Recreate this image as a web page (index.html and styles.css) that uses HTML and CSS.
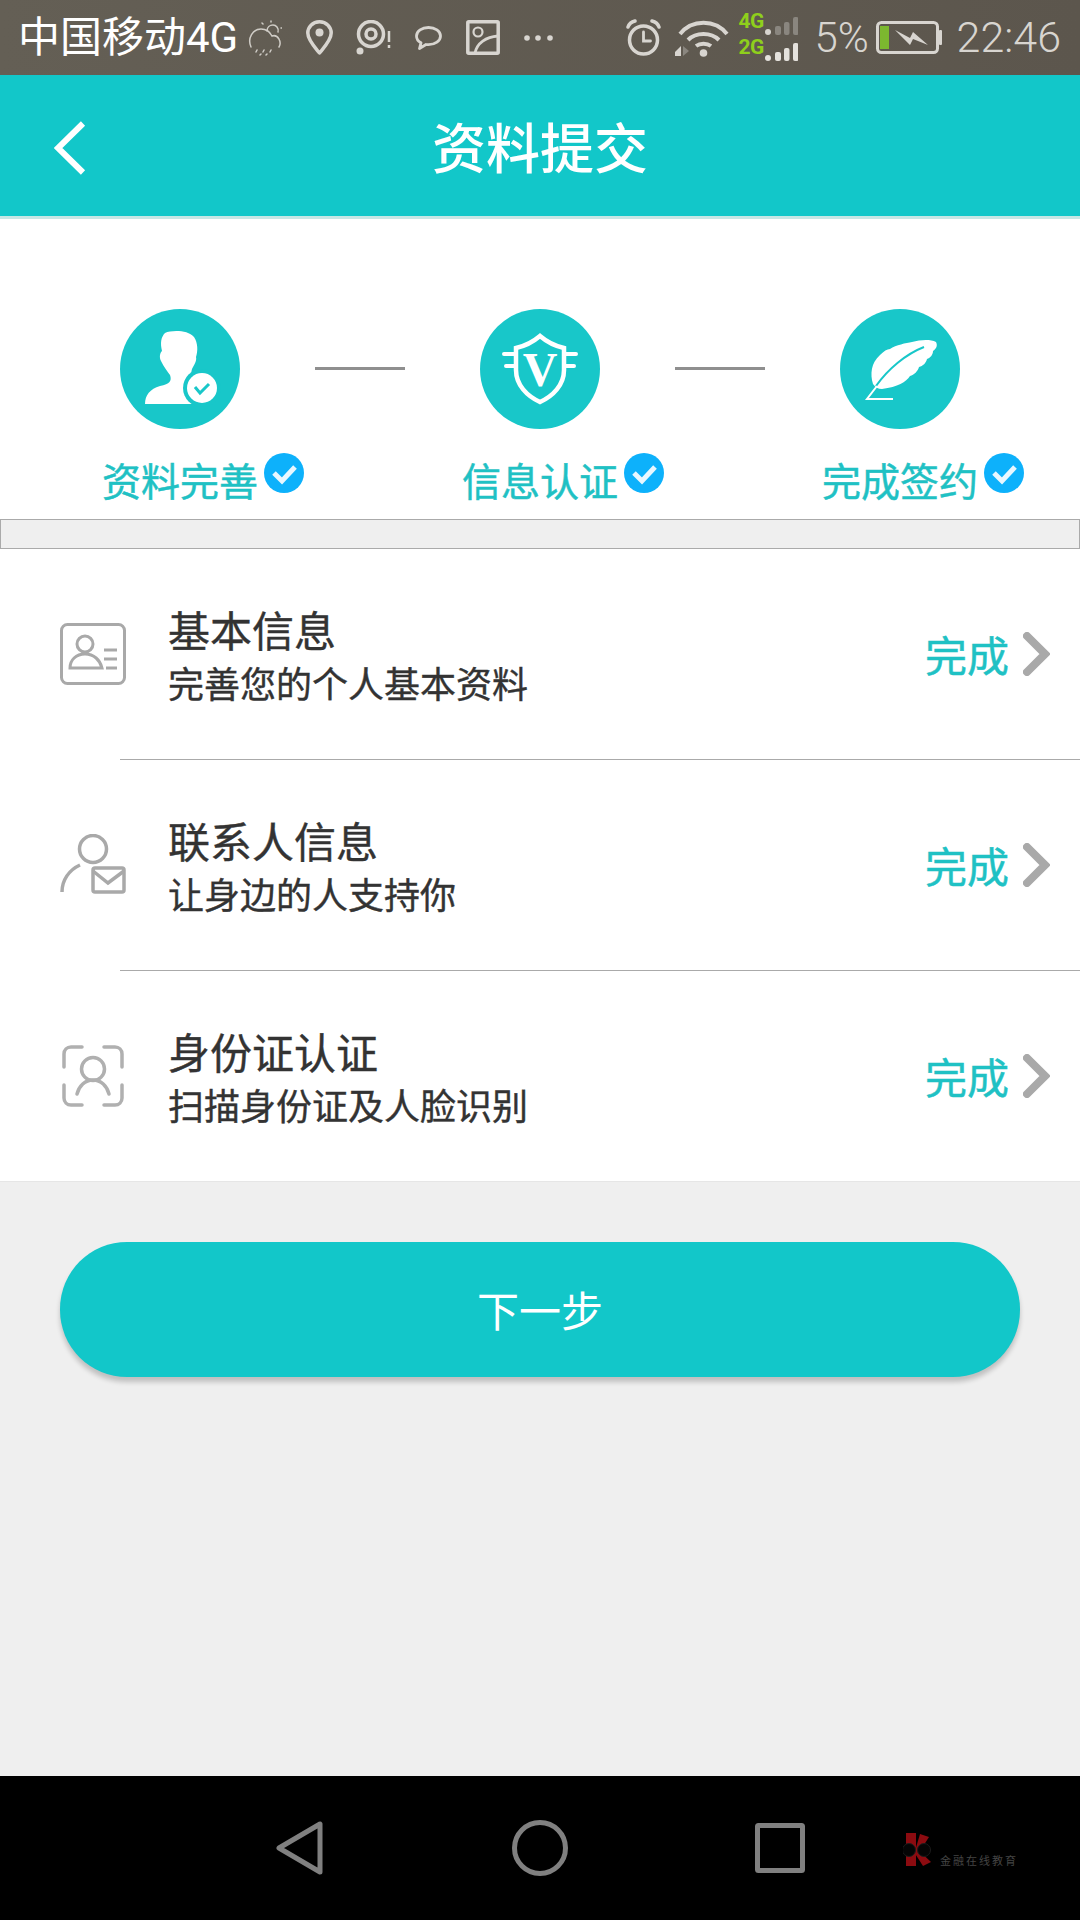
FILE: index.html
```html
<!DOCTYPE html>
<html lang="zh-CN">
<head>
<meta charset="utf-8">
<title>资料提交</title>
<link rel="stylesheet" href="styles.css">
</head>
<body>
<div class="screen">
  <div class="statusbar">
    <span class="carrier">中国移动4G</span>
    <svg class="si si-weather" width="34" height="36" viewBox="0 0 34 36" fill="none" stroke="#cfccc6" stroke-width="1.5" stroke-linecap="round"><path d="M3 27C-1 18 5 9 13 9c5 0 9 3 11 7 6-2 10 6 7 11"/><path d="M19 11c0-4 3-6 6-6s6 3 5 7"/><path d="M23 1v1M14 3l1 1M33 8h1M9 30l-1 2M16 30l-1 2M23 30l-1 2M13 34l-1 1M19 34l-1 1"/></svg>
    <svg class="si si-pin" width="27" height="35" viewBox="0 0 27 35" fill="none" stroke="#d8d5d0" stroke-width="3.5"><path d="M13.5 1.8C6.5 1.8 1.8 7 1.8 13c0 7 7.2 14.500 11.700 20 4.500-5.500 11.700-13 11.700-20 0-6-4.700-11.200-11.700-11.200Z" stroke-linejoin="round"/><circle cx="13.500" cy="12.500" r="4" fill="#d8d5d0" stroke="none"/></svg>
    <svg class="si si-eye" width="37" height="35" viewBox="0 0 37 35" fill="none" stroke="#d8d5d0" stroke-width="3.500"><circle cx="15" cy="14" r="12.500"/><circle cx="15" cy="14" r="5"/><circle cx="4" cy="31" r="3.500" fill="#d8d5d0" stroke="none"/><path d="M33 11v11M33 25v3" stroke-width="2.500"/></svg>
    <svg class="si si-chat" width="27" height="24" viewBox="0 0 27 24" fill="none" stroke="#d8d5d0" stroke-width="2.800" stroke-linejoin="round"><path d="M13.500 1.500c-6.500 0-12 3.500-12 8.500 0 3 2 5.500 4.500 6.800L4.500 22.500 11 18.500c1 .2 1.500.2 2.500.2 6.500 0 12-3.700 12-8.700s-5.500-8.500-12-8.500Z"/></svg>
    <svg class="si si-image" width="34" height="35" viewBox="0 0 34 35" fill="none" stroke="#d8d5d0" stroke-width="3.500"><rect x="1.800" y="1.800" width="30.400" height="31.400" rx="1"/><circle cx="12" cy="12" r="4.500" stroke-width="2.200"/><path d="M9 33c2-10 11-16 23-17" stroke-width="2.800"/></svg>
    <svg class="si si-dots" width="30" height="6" viewBox="0 0 30 6" fill="#d8d5d0"><circle cx="3" cy="3" r="2.800"/><circle cx="14" cy="3" r="2.800"/><circle cx="26" cy="3" r="2.800"/></svg>
    <div class="status-right">
      <svg class="si-alarm" width="37" height="37" viewBox="0 0 37 37" fill="none" stroke="#d8d5d0" stroke-width="3.500" stroke-linecap="round"><circle cx="18.500" cy="21" r="14"/><path d="M18.500 13v9h7" stroke-width="2.800"/><path d="M3 8c1-3 3-5 7-6M34 8c-1-3-3-5-7-6"/></svg>
      <svg class="si-wifi" width="55" height="38" viewBox="0 0 55 38" fill="none" stroke="#d8d5d0" stroke-width="4"><path d="M5 15C17 0 40 0 52 15M13 21c8-8 23-8 31 0M21 27c4-3 11-3 15 0"/><circle cx="28.500" cy="34" r="3.800" fill="#d8d5d0" stroke="none"/><path d="M0 33l6-6v10H0Z" fill="#d8d5d0" stroke="none"/><path d="M8 27l6 5-6 5Z" fill="#8a867f" stroke="none"/></svg>
      <div class="netsig">
        <div class="netline">
          <span class="netlabel">4G</span>
          <svg width="33" height="18" viewBox="0 0 33 18"><circle cx="3" cy="15" r="3" fill="#d8d5d0"/><rect x="10" y="9" width="6" height="9" rx="2" fill="#8a867f"/><rect x="19" y="5" width="5.500" height="13" rx="2" fill="#8a867f"/><rect x="28" y="0" width="5.500" height="18" rx="2" fill="#8a867f"/></svg>
        </div>
        <div class="netline">
          <span class="netlabel">2G</span>
          <svg width="33" height="18" viewBox="0 0 33 18" fill="#e4e1dc"><circle cx="3" cy="15" r="3"/><rect x="10" y="9" width="6" height="9" rx="2"/><rect x="19" y="5" width="5.500" height="13" rx="2"/><rect x="28" y="0" width="5.500" height="18" rx="2"/></svg>
        </div>
      </div>
      <span class="percent">5%</span>
      <svg class="si-battery" width="66" height="33" viewBox="0 0 66 33"><rect x="1.500" y="1.500" width="60" height="30" rx="4" fill="none" stroke="#d8d5d0" stroke-width="3"/><rect x="63" y="9" width="3" height="15" rx="1" fill="#d8d5d0"/><rect x="4" y="5" width="9" height="23" fill="#7cb82f"/><path d="M19 9l15 8 3-6 15 13-15-6-3 6Z" fill="#d8d5d0"/></svg>
      <span class="clock">22:46</span>
    </div>
  </div>

  <header class="appbar">
    <svg class="back" width="32" height="54" viewBox="0 0 32 54" fill="none" stroke="#fff" stroke-width="6"><path d="M29 2.500 4 27l25 24.500"/></svg>
    <h1 class="appbar-title">资料提交</h1>
  </header>

  <section class="steps">
    <div class="step">
      <svg class="step-icon" width="120" height="120" viewBox="0 0 120 120"><circle cx="60" cy="60" r="60" fill="#18c7c9"/><path d="M45 24c7-3 23-3 29 4 4 6 4 14 2 20 1 4-2 8-4 12-2 6 0 12 6 16v19H25c0-9 5-15 15-18 10-2 12-5 10-11-3-4-6-8-9-14-2-4-1-8 1-10-2-8-1-14 3-18Z" fill="#fff"/><circle cx="82" cy="79" r="19" fill="#18c7c9"/><circle cx="82" cy="79" r="15" fill="#fff"/><path d="M75 78l5 6 9-9" fill="none" stroke="#18c7c9" stroke-width="3"/></svg>
      <div class="step-label">资料完善<svg class="tick" width="40" height="40" viewBox="0 0 40 40"><circle cx="20" cy="20" r="20" fill="#0db1fb"/><path d="M10 20l8 8 13-14" fill="none" stroke="#e8f7ff" stroke-width="5"/></svg></div>
    </div>
    <div class="connector"></div>
    <div class="step">
      <svg class="step-icon" width="120" height="120" viewBox="0 0 120 120"><circle cx="60" cy="60" r="60" fill="#18c7c9"/><path d="M60 27c7 6 15 10 24 12v22c0 15-11 26-24 32-13-6-24-17-24-32V39c9-2 17-6 24-12Z" fill="none" stroke="#fff" stroke-width="4.500"/><path d="M24 45h11M26 57h9M85 45h11M85 57h9" stroke="#fff" stroke-width="4" stroke-linecap="round"/><text class="shield-v" x="60" y="77" text-anchor="middle">V</text></svg>
      <div class="step-label">信息认证<svg class="tick" width="40" height="40" viewBox="0 0 40 40"><circle cx="20" cy="20" r="20" fill="#0db1fb"/><path d="M10 20l8 8 13-14" fill="none" stroke="#e8f7ff" stroke-width="5"/></svg></div>
    </div>
    <div class="connector"></div>
    <div class="step">
      <svg class="step-icon" width="120" height="120" viewBox="0 0 120 120"><circle cx="60" cy="60" r="60" fill="#18c7c9"/><path d="M96 33c2 4 0 7-3 9 0 4-3 7-6 8-1 4-4 7-8 8-1 4-5 8-9 9-4 6-12 11-28 13-4 0-7-2-9-5-3-10-2-21 7-29 4-4 7-6 10-6 6-4 16-6 22-7 8-2 18-3 24 0Z" fill="#fff"/><path d="M84 38C66 45 48 60 36 77" fill="none" stroke="#18c7c9" stroke-width="2"/><path d="M37 77 27 90h26" stroke="#fff" stroke-width="2" fill="none"/></svg>
      <div class="step-label">完成签约<svg class="tick" width="40" height="40" viewBox="0 0 40 40"><circle cx="20" cy="20" r="20" fill="#0db1fb"/><path d="M10 20l8 8 13-14" fill="none" stroke="#e8f7ff" stroke-width="5"/></svg></div>
    </div>
  </section>

  <div class="band"></div>

  <section class="list">
    <div class="row">
      <svg class="row-icon" width="66" height="62" viewBox="0 0 66 62" fill="none" stroke="#a9a9a9" stroke-width="3"><rect x="1.500" y="1.500" width="63" height="59" rx="6"/><circle cx="25" cy="21" r="8"/><path d="M10 45c0-8 6-14 15-14s15 6 17 14Z"/><path d="M44 27h13M44 36h13M46 45h11"/></svg>
      <div class="row-text"><div class="row-title">基本信息</div><div class="row-sub">完善您的个人基本资料</div></div>
      <span class="row-status">完成</span>
      <svg class="row-chevron" width="27" height="44" viewBox="0 0 27 44" fill="none" stroke="#a9a9a9" stroke-width="8" stroke-linecap="round"><path d="M4 4l18 18L4 40"/></svg>
    </div>
    <div class="divider"></div>
    <div class="row">
      <svg class="row-icon" width="66" height="62" viewBox="0 2 66 62" fill="none" stroke="#a9a9a9" stroke-width="3.500"><circle cx="33" cy="17" r="13.500"/><path d="M2 60c0-12 7-22 18-27"/><rect x="33" y="36" width="31" height="24" rx="2"/><path d="M33 39l15 12 16-12"/></svg>
      <div class="row-text"><div class="row-title">联系人信息</div><div class="row-sub">让身边的人支持你</div></div>
      <span class="row-status">完成</span>
      <svg class="row-chevron" width="27" height="44" viewBox="0 0 27 44" fill="none" stroke="#a9a9a9" stroke-width="8" stroke-linecap="round"><path d="M4 4l18 18L4 40"/></svg>
    </div>
    <div class="divider"></div>
    <div class="row">
      <svg class="row-icon" width="66" height="62" viewBox="0 0 66 62" fill="none" stroke="#b0b0b0" stroke-width="3.500" stroke-linecap="round"><path d="M4 22V9c0-4 3-7 7-7h11M44 2h11c4 0 7 3 7 7v13M4 40v13c0 4 3 7 7 7h11M44 60h11c4 0 7-3 7-7V40"/><circle cx="33" cy="24" r="11.500"/><path d="M17 49c2-8 8-14 16-14s14 6 16 14"/></svg>
      <div class="row-text"><div class="row-title">身份证认证</div><div class="row-sub">扫描身份证及人脸识别</div></div>
      <span class="row-status">完成</span>
      <svg class="row-chevron" width="27" height="44" viewBox="0 0 27 44" fill="none" stroke="#a9a9a9" stroke-width="8" stroke-linecap="round"><path d="M4 4l18 18L4 40"/></svg>
    </div>
  </section>

  <main class="actions">
    <button class="next" type="button">下一步</button>
  </main>

  <nav class="navbar">
    <svg width="47" height="54" viewBox="0 0 47 54" fill="none" stroke="#808080" stroke-width="5" stroke-linejoin="round"><path d="M44 3v48L3 27Z"/></svg>
    <svg class="nav-home" width="56" height="56" viewBox="0 0 56 56" fill="none" stroke="#808080" stroke-width="5"><circle cx="28" cy="28" r="25.500"/></svg>
    <svg class="nav-recent" width="50" height="50" viewBox="0 0 50 50" fill="none" stroke="#808080" stroke-width="5" stroke-linejoin="round"><rect x="2.500" y="2.500" width="45" height="45" rx="1"/></svg>
    <div class="watermark">
      <svg width="28" height="33" viewBox="0 0 28 33"><path d="M3 0h10v33H3Z" fill="#8c0b10"/><path d="M17 1l9 3-9 14-5 0Z" fill="#8c0b10"/><path d="M12 14l16 15-8 4-9-14Z" fill="#8c0b10"/><circle cx="6" cy="17" r="6.500" fill="#050505" stroke="#1c1c1c"/><circle cx="21" cy="17" r="6.500" fill="#050505" stroke="#1c1c1c"/></svg>
      <span class="watermark-text">金融在线教育</span>
    </div>
  </nav>
</div>
</body>
</html>
```

FILE: styles.css
```css
* { box-sizing: border-box; }
html, body { margin: 0; padding: 0; }
body { font-family: "Noto Sans CJK SC", "Noto Sans", sans-serif; background: #efefef; }
.screen { width: 1080px; height: 1920px; display: flex; flex-direction: column; overflow: hidden; }

.statusbar { height: 75px; flex: none; display: flex; align-items: center; padding-left: 18px; background: linear-gradient(90deg, #645f55, #5c564d); color: #fff; }
.carrier { font-family: Roboto, "Noto Sans CJK SC", sans-serif; font-size: 42px; line-height: 75px; width: 230px; white-space: nowrap; }
.si { flex: none; }
.si-pin { margin-left: 24px; }
.si-eye { margin-left: 23px; }
.si-chat { margin-left: 22px; }
.si-image { margin-left: 24px; }
.si-dots { margin-left: 24px; }
.status-right { margin-left: auto; padding-right: 19px; display: flex; align-items: center; }
.si-alarm { margin-right: 13px; }
.si-wifi { margin-right: 9px; }
.netsig { display: flex; flex-direction: column; gap: 8px; margin-top: 2px; margin-right: 17px; }
.netline { display: flex; align-items: flex-end; height: 18px; }
.netlabel { align-self: flex-start; margin-top: -6px; font-family: Roboto, sans-serif; font-weight: 700; font-size: 21px; line-height: 20px; color: #8fcf1c; width: 26px; letter-spacing: -.5px; }
.percent, .clock { font-family: Roboto, sans-serif; font-weight: 300; font-size: 42px; line-height: 75px; color: #d8d5d0; }
.percent { width: 61px; white-space: nowrap; }
.clock { margin-left: 15px; font-size: 43px; }

.appbar { height: 144px; flex: none; position: relative; display: flex; align-items: center; justify-content: center; background: #12c7c9; border-bottom: 3px solid #c6e7e5; }
.appbar-title { margin: 0; font-size: 54px; font-weight: 500; line-height: 141px; color: #fff; }
.back { position: absolute; left: 54px; top: 46px; }

.steps { height: 300px; flex: none; background: #fff; padding: 90px 0 0 90px; display: flex; align-items: flex-start; gap: 45px; }
.step { width: 180px; display: flex; flex-direction: column; align-items: center; }
.step-icon { display: block; }
.shield-v { font-family: "Liberation Serif", serif; font-weight: 700; font-size: 48px; fill: #fff; }
.step-label { position: relative; margin-top: 28px; font-size: 39px; line-height: 44px; color: #1fc1c4; -webkit-text-stroke: .5px #1fc1c4; white-space: nowrap; }
.tick { position: absolute; left: 162px; top: -4px; }
.connector { width: 90px; height: 3px; margin-top: 58px; background: #8f8f8f; }

.band { height: 30px; flex: none; background: #efefef; border: 1px solid #aaa; }

.list { flex: none; background: #fff; }
.row { height: 210px; display: flex; align-items: center; padding: 0 30px 0 60px; }
.divider { height: 1px; margin-left: 120px; background: #aaa; }
.row-icon { flex: none; margin-right: 42px; }
.row-text { flex: 1; margin-top: 1px; color: #333; -webkit-text-stroke: .4px #333; }
.row-title { font-size: 42px; line-height: 54px; }
.row-sub { font-size: 36px; line-height: 52px; }
.row-status { font-size: 42px; line-height: 54px; color: #1fc1c4; -webkit-text-stroke: .5px #1fc1c4; margin-right: 14px; }
.row-chevron { flex: none; }

.actions { flex: 1; padding: 60px 60px 0; background: #efefef; border-top: 1px solid #e6e6e6; }
.next { display: block; width: 100%; height: 135px; padding: 0 0 3px; border: 0; border-radius: 67px / 67px; background: #12c7c9; color: #fff; font: inherit; font-size: 42px; box-shadow: 0 5px 5px rgba(0, 0, 0, .2); }

.navbar { height: 144px; flex: none; display: flex; align-items: center; padding-left: 276px; background: #000; }
.nav-home { margin-left: 189px; }
.nav-recent { margin-left: 187px; }
.watermark { margin-left: 98px; margin-top: 2px; display: flex; align-items: flex-end; gap: 9px; }
.watermark-text { font-size: 11px; line-height: 11px; letter-spacing: 2px; color: #444; white-space: nowrap; }
```
